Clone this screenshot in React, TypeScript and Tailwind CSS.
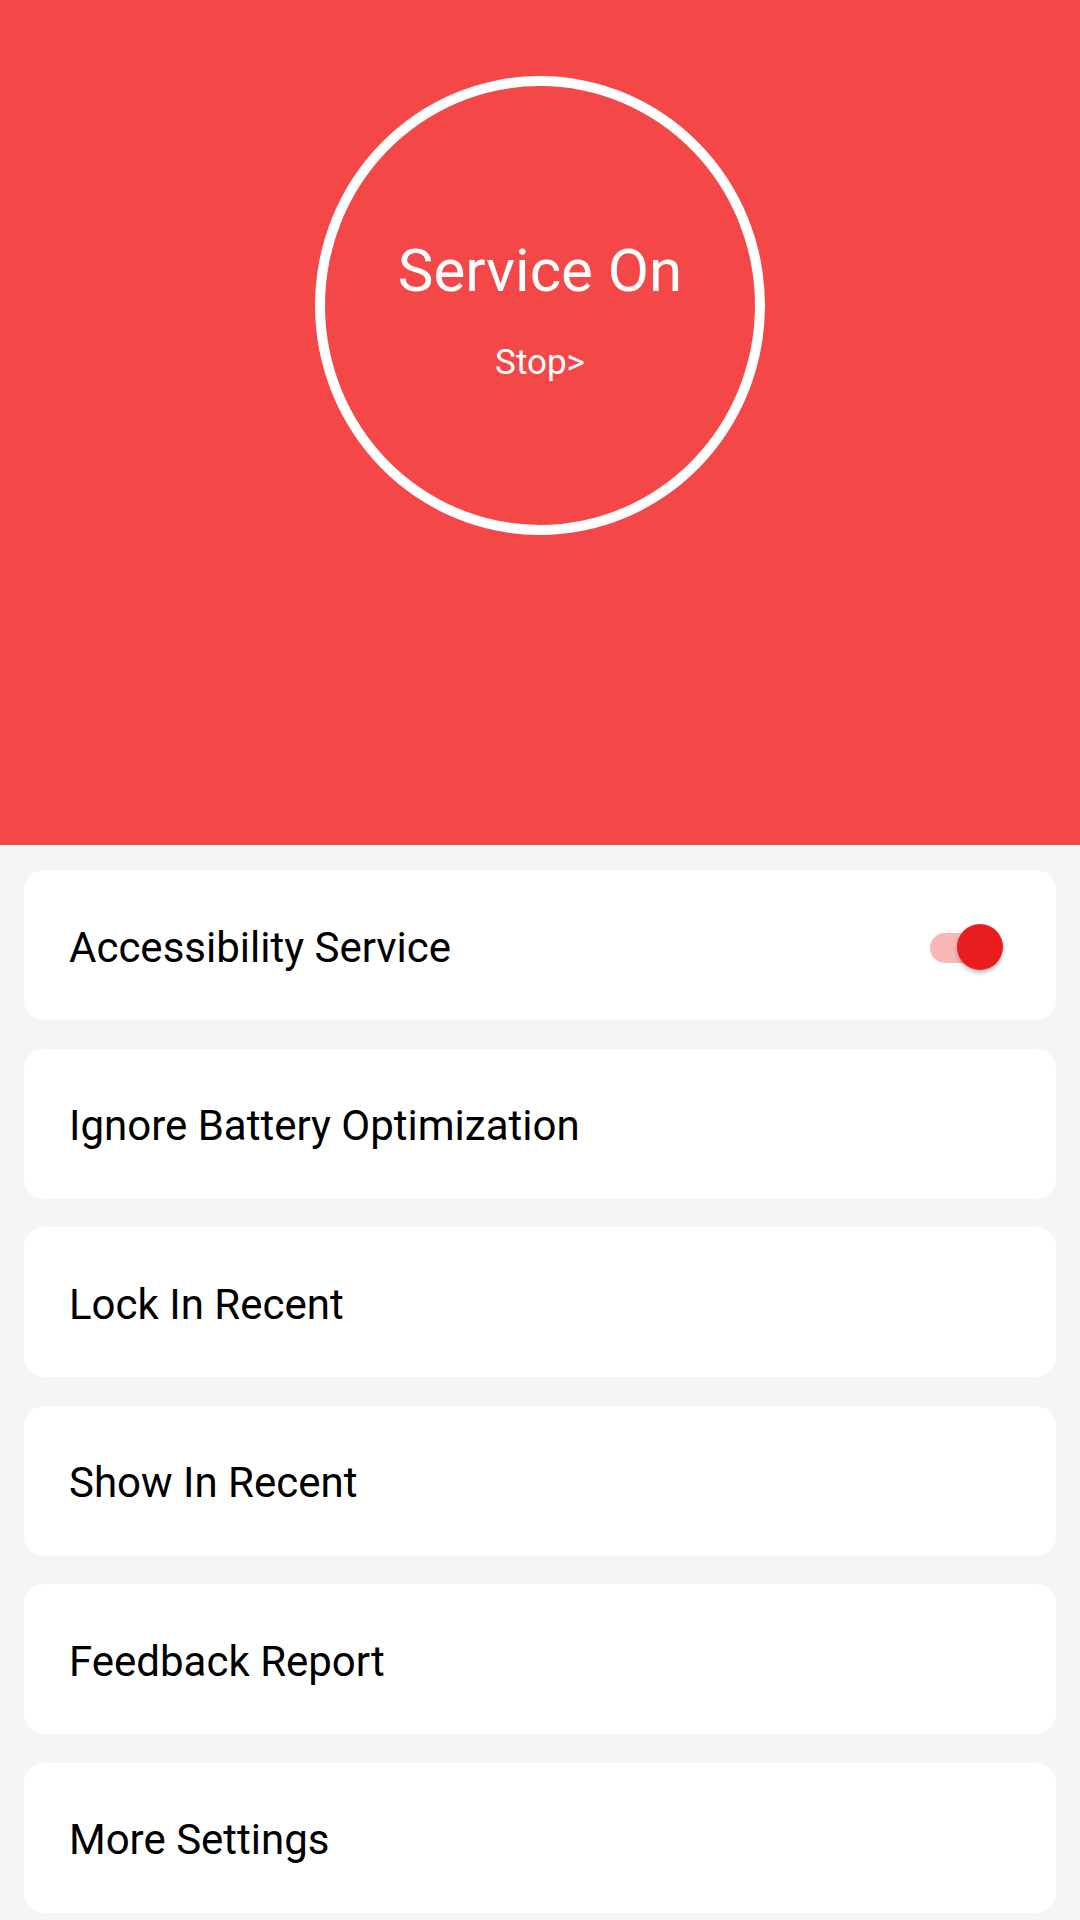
const items = [
  "Accessibility Service",
  "Ignore Battery Optimization",
  "Lock In Recent",
  "Show In Recent",
  "Feedback Report",
  "More Settings",
];

function Toggle() {
  return (
    <div className="relative w-[73px] h-[47px] flex items-center">
      <div className="w-[60px] h-[30px] rounded-full bg-[#f8b8b8]" />
      <div className="absolute right-0 top-0 w-[46px] h-[46px] rounded-full bg-[#e91c1e] shadow-[0_3px_4px_rgba(0,0,0,0.25)]" />
    </div>
  );
}

export default function App() {
  return (
    <div className="w-[1080px] h-[1920px] bg-[#f5f5f5] overflow-hidden" style={{ fontFamily: "Roboto, 'Noto Sans', sans-serif" }}>
      <div className="h-[845px] bg-[#f44747] flex justify-center pt-[76px]">
        <div className="w-[450px] h-[459px] rounded-[50%] border-[10px] border-white flex flex-col items-center pt-[155px] text-white">
          <div className="text-[60px] leading-none">Service On</div>
          <div className="text-[35px] leading-none mt-[44px]">Stop&gt;</div>
        </div>
      </div>
      <div className="flex flex-col gap-[28.5px] px-[24px] pt-[25px]">
        {items.map((label, i) => (
          <div key={i} className="h-[150px] bg-white rounded-[20px] flex items-center justify-between pl-[45px] pr-[53px] pt-[5px]">
            <span className="text-[42px] text-black leading-none">{label}</span>
            {i === 0 && <Toggle />}
          </div>
        ))}
      </div>
    </div>
  );
}
